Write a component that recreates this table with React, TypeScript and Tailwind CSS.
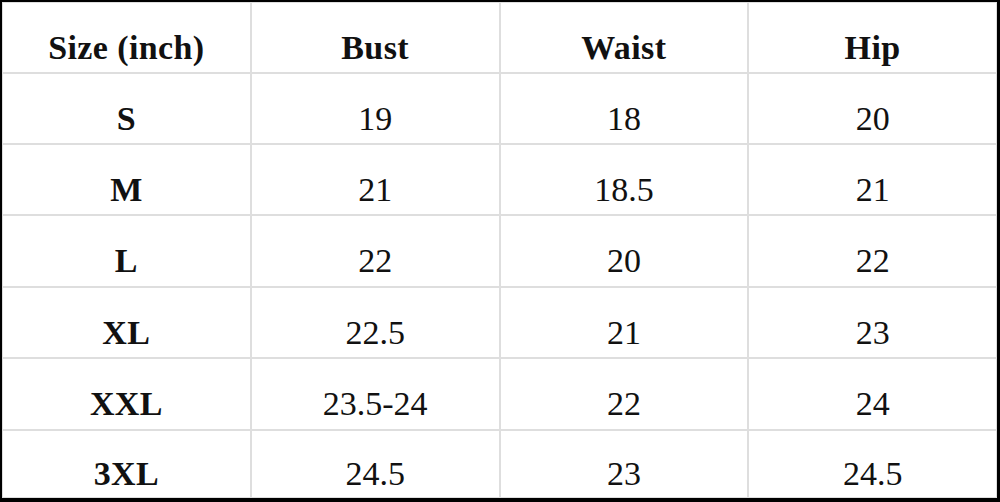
import React from 'react';

const headers = ['Size (inch)', 'Bust', 'Waist', 'Hip'];

const rows: string[][] = [
  ['S', '19', '18', '20'],
  ['M', '21', '18.5', '21'],
  ['L', '22', '20', '22'],
  ['XL', '22.5', '21', '23'],
  ['XXL', '23.5-24', '22', '24'],
  ['3XL', '24.5', '23', '24.5'],
];

function Cell({ children, bold }: { children: React.ReactNode; bold?: boolean }) {
  return (
    <div
      className={`bg-white flex items-center justify-center pt-[20px] leading-none text-[34px] text-[#111] ${
        bold ? 'font-bold tracking-[0.4px]' : 'font-normal'
      }`}
    >
      {children}
    </div>
  );
}

export default function App() {
  return (
    <div
      className="w-[1000px] h-[502px] bg-black pt-[2px] pl-[2px] pr-[3px] pb-[4px]"
      style={{ fontFamily: '"Liberation Serif", "Times New Roman", serif' }}
    >
      <div className="h-full bg-[#dedede] p-px grid grid-cols-4 grid-rows-[69px_69px_69px_70px_69px_70px_1fr] gap-[2px]">
        {headers.map((h) => (
          <Cell key={h} bold>
            {h}
          </Cell>
        ))}
        {rows.map((r) =>
          r.map((v, i) => (
            <Cell key={r[0] + i} bold={i === 0}>
              {v}
            </Cell>
          ))
        )}
      </div>
    </div>
  );
}
